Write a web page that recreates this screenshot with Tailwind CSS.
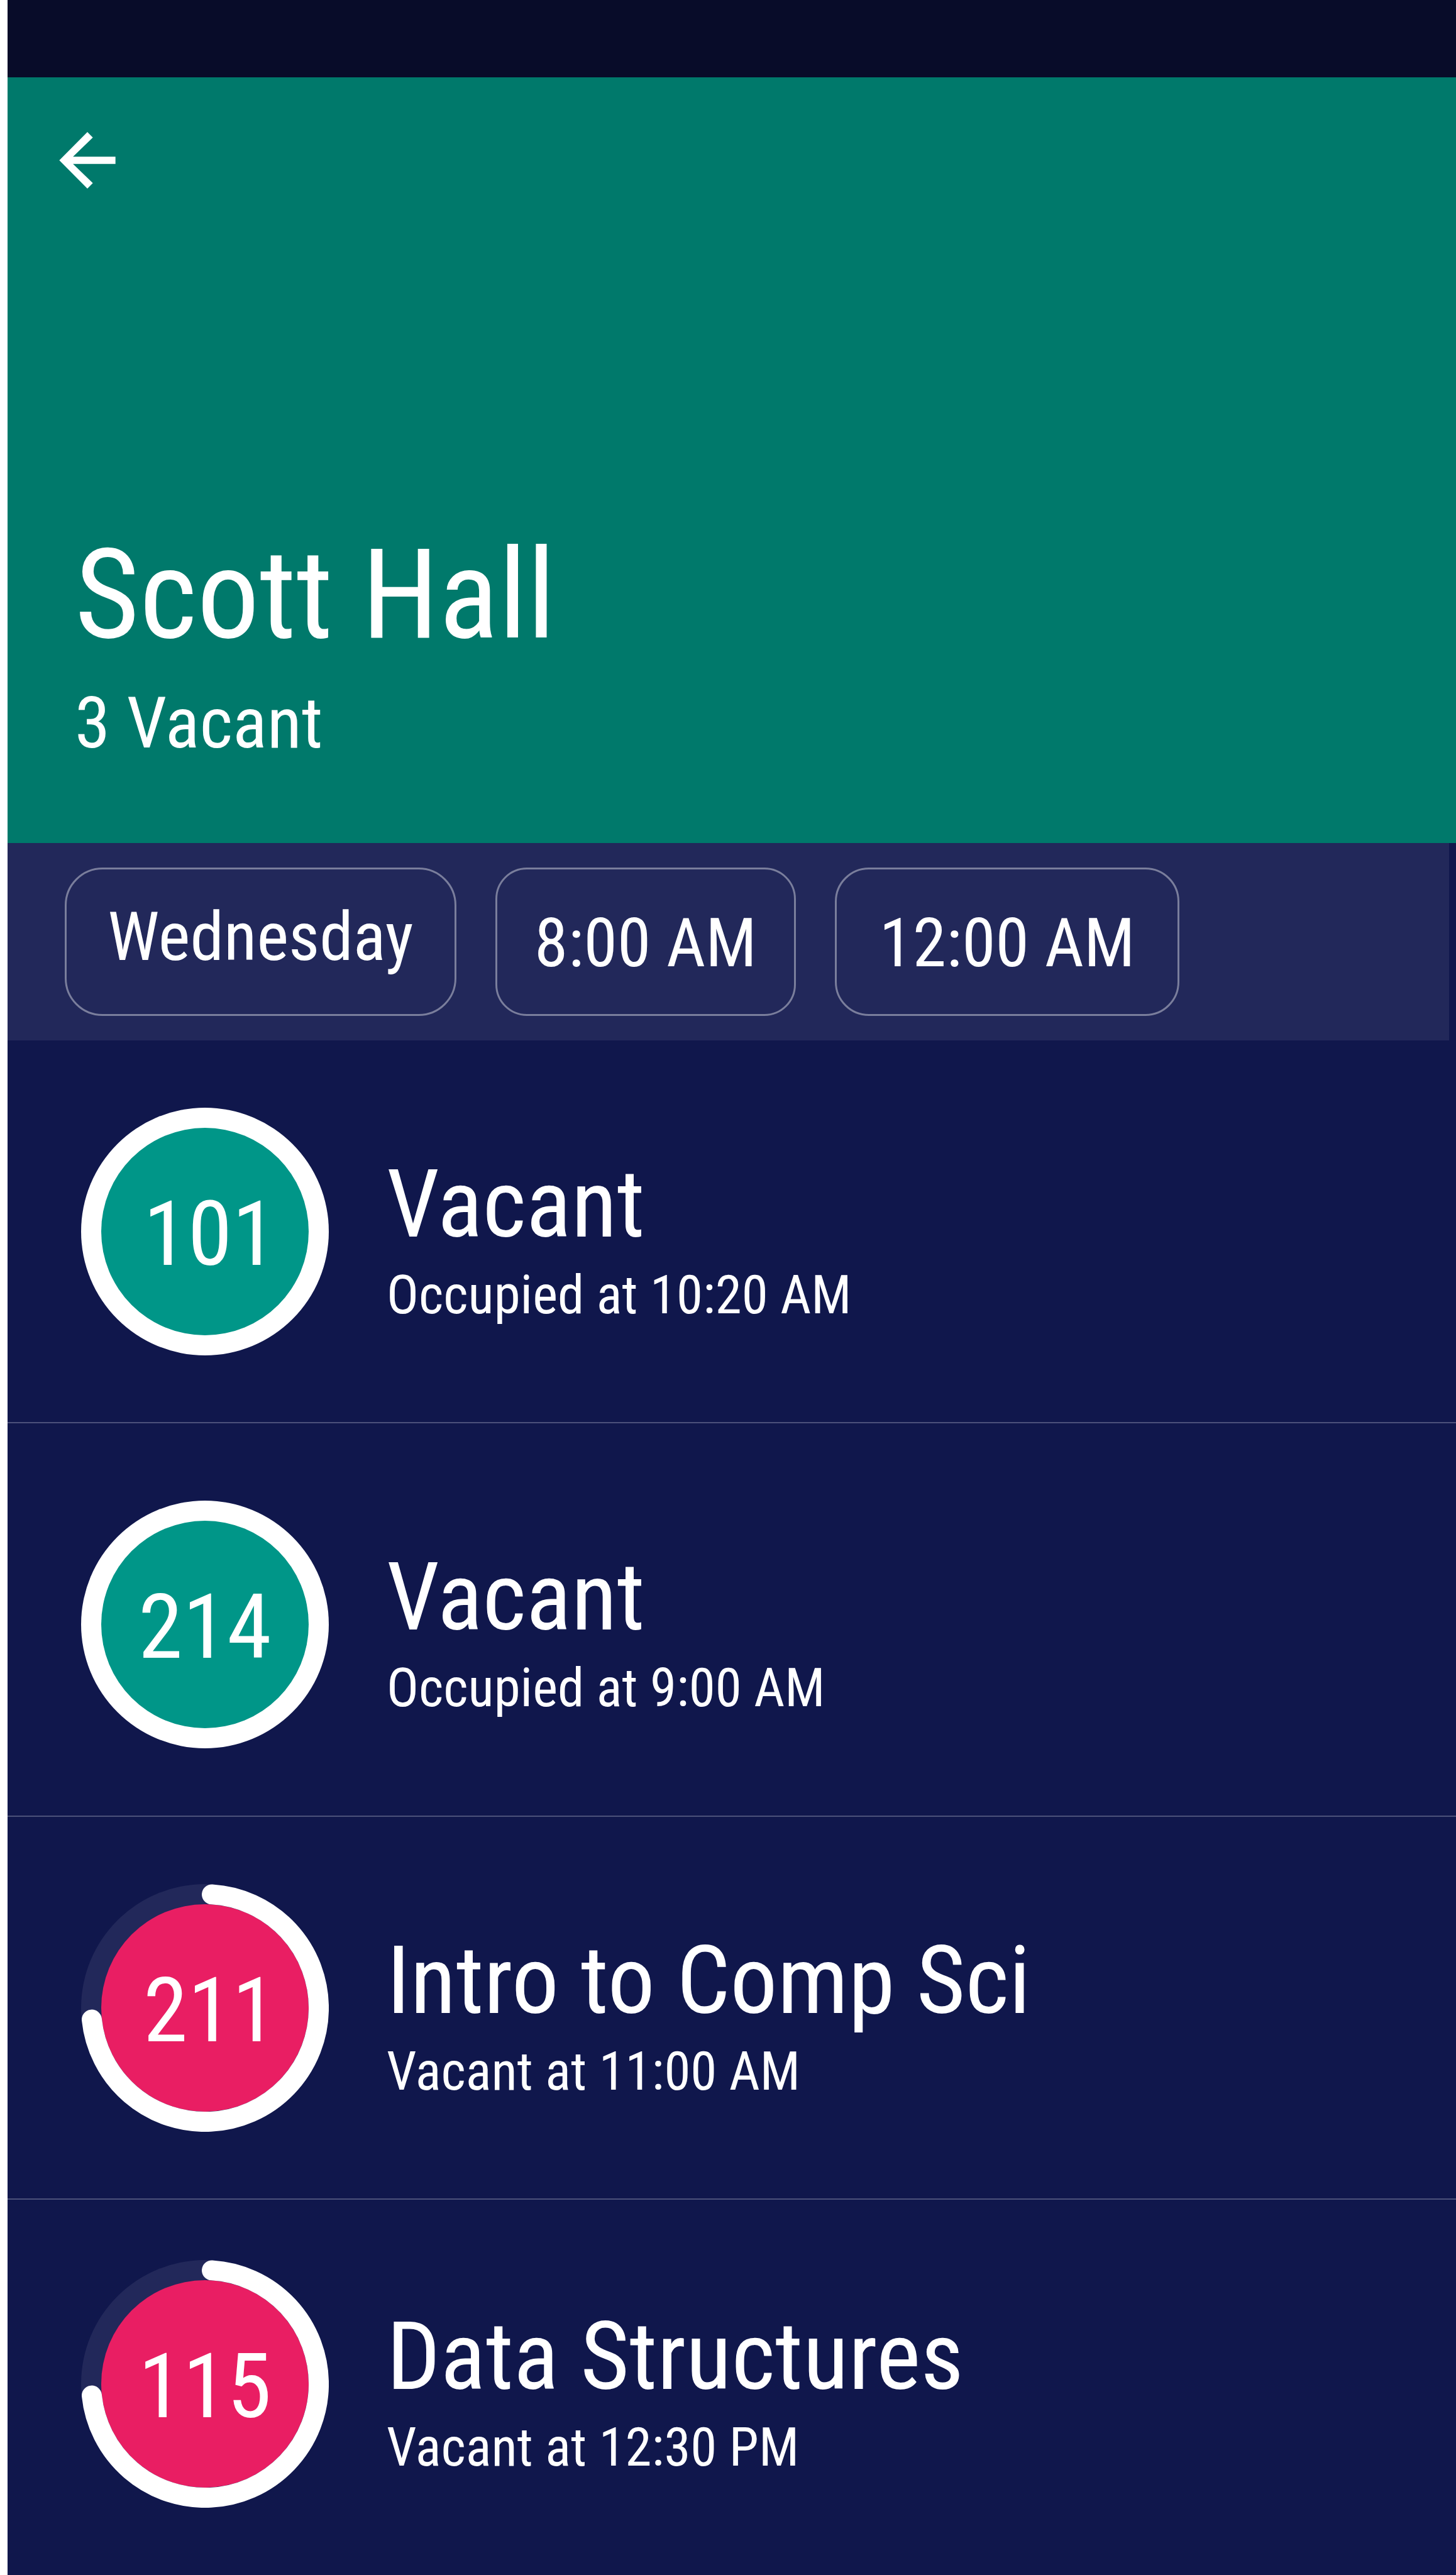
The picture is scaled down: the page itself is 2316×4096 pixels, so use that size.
<!DOCTYPE html>
<html lang="en">
<head>
<meta charset="utf-8">
<meta name="viewport" content="width=device-width, initial-scale=1">
<title>Scott Hall</title>
<script src="https://cdn.jsdelivr.net/npm/@tailwindcss/browser@4"></script>
</head>
<body class="bg-white pl-3 font-['Roboto_Condensed',Roboto,sans-serif] text-white">
<div class="flex min-h-screen flex-col bg-[#10174c]">
  <!-- System status bar -->
  <div class="h-[123px] bg-[#080c29]"></div>

  <header class="flex min-h-[1218px] flex-col justify-between bg-[#00796b] pt-[65px] pb-[131px]">
    <button type="button" aria-label="Back" class="ml-[60px] size-[134px]">
      <svg viewBox="0 0 24 24" class="size-full" fill="currentColor" aria-hidden="true"><path d="M20 10.95H7.9l5.65-5.45L12 3.95 4 12l8 8.05 1.55-1.55L7.9 13.05H20z"/></svg>
    </button>
    <div class="flex flex-col gap-11 pl-[107px]">
      <h1 class="text-[198px] leading-[200px]">Scott Hall</h1>
      <p class="text-[114px] leading-[120px]">3 Vacant</p>
    </div>
  </header>

  <!-- Day and time filters -->
  <div class="mr-[11px] flex gap-[62px] bg-[#22285a] py-[39px] pl-[91px] text-[108px] leading-[120px]">
    <button type="button" class="h-[236px] w-[623px] rounded-[60px] border-3 border-white/40 pb-4">Wednesday</button>
    <button type="button" class="h-[236px] w-[478px] rounded-[50px] border-3 border-white/40 pt-1">8:00 AM</button>
    <button type="button" class="h-[236px] w-[548px] rounded-[54px] border-3 border-white/40 pt-1">12:00 AM</button>
  </div>

  <ul>
    <li class="flex gap-[92px] border-b-2 border-[#4c517a] pt-[107px] pb-[106px] pl-[117px]">
      <div class="relative grid size-[394px] shrink-0 place-items-center">
        <svg viewBox="0 0 394 394" class="absolute inset-0 size-full" aria-hidden="true">
          <circle cx="197" cy="197" r="197" fill="#fff"/><circle cx="197" cy="197" r="165" fill="#009688"/>
        </svg>
        <span class="relative pt-2 pl-4 text-[143px] leading-[144px]">101</span>
      </div>
      <div class="flex flex-col gap-5 pt-20">
        <h2 class="text-[150px] leading-[148px]">Vacant</h2>
        <p class="text-[85px] leading-[100px]">Occupied at 10:20 AM</p>
      </div>
    </li>
    <li class="flex gap-[92px] border-b-2 border-[#4c517a] pt-[123px] pb-[107px] pl-[117px]">
      <div class="relative grid size-[394px] shrink-0 place-items-center">
        <svg viewBox="0 0 394 394" class="absolute inset-0 size-full" aria-hidden="true">
          <circle cx="197" cy="197" r="197" fill="#fff"/><circle cx="197" cy="197" r="165" fill="#009688"/>
        </svg>
        <span class="relative pt-2 text-[143px] leading-[144px]">214</span>
      </div>
      <div class="flex flex-col gap-5 pt-20">
        <h2 class="text-[150px] leading-[148px]">Vacant</h2>
        <p class="text-[85px] leading-[100px]">Occupied at 9:00 AM</p>
      </div>
    </li>
    <li class="flex gap-[92px] border-b-2 border-[#4c517a] pt-[107px] pb-[106px] pl-[117px]">
      <div class="relative grid size-[394px] shrink-0 place-items-center">
        <svg viewBox="0 0 394 394" class="absolute inset-0 size-full" aria-hidden="true">
          <circle cx="197" cy="197" r="197" fill="#22285a"/><circle cx="197" cy="197" r="165" fill="#e91e63"/>
          <path d="M208 16.4A181 181 0 1 1 17 215.6" fill="none" stroke="#fff" stroke-width="32" stroke-linecap="round"/>
        </svg>
        <span class="relative pt-2 pl-4 text-[143px] leading-[144px]">211</span>
      </div>
      <div class="flex flex-col gap-5 pt-20">
        <h2 class="text-[150px] leading-[148px]">Intro to Comp Sci</h2>
        <p class="text-[85px] leading-[100px]">Vacant at 11:00 AM</p>
      </div>
    </li>
    <li class="flex gap-[92px] pt-24 pb-[107px] pl-[117px]">
      <div class="relative grid size-[394px] shrink-0 place-items-center">
        <svg viewBox="0 0 394 394" class="absolute inset-0 size-full" aria-hidden="true">
          <circle cx="197" cy="197" r="197" fill="#22285a"/><circle cx="197" cy="197" r="165" fill="#e91e63"/>
          <path d="M208 16.4A181 181 0 1 1 17 215.6" fill="none" stroke="#fff" stroke-width="32" stroke-linecap="round"/>
        </svg>
        <span class="relative pt-2 text-[143px] leading-[144px]">115</span>
      </div>
      <div class="flex flex-col gap-5 pt-20">
        <h2 class="text-[150px] leading-[148px]">Data Structures</h2>
        <p class="text-[85px] leading-[100px]">Vacant at 12:30 PM</p>
      </div>
    </li>
  </ul>
</div>
</body>
</html>
